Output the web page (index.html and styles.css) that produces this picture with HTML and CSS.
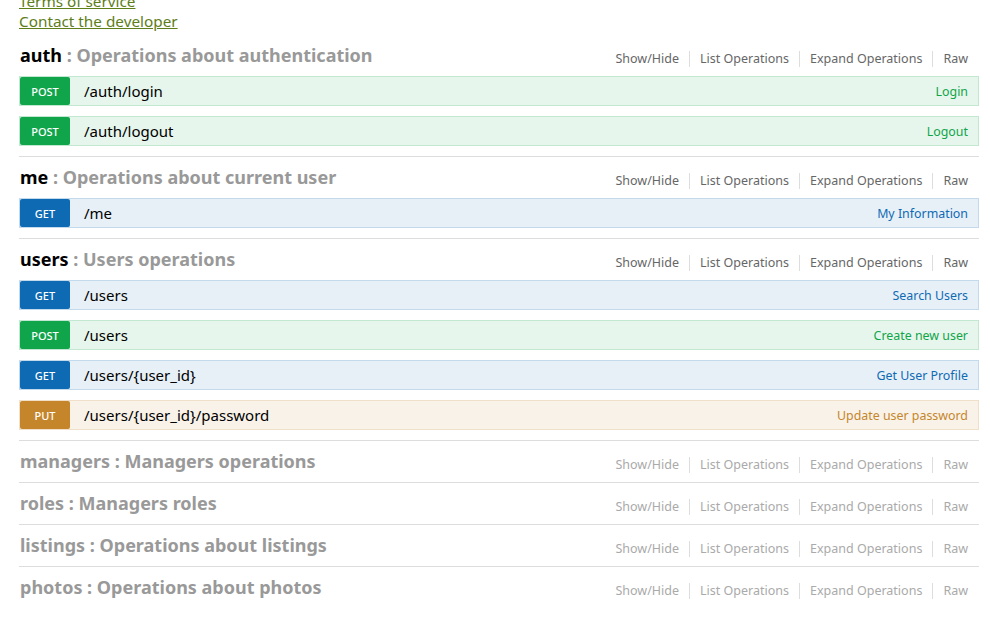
FILE: index.html
```html
<!DOCTYPE html>
<html>
<head>
<meta charset="utf-8">
<link rel="stylesheet" href="styles.css">
</head>
<body>
<div class="wrap">
  <div class="info">
    <a class="info-link" href="#">Terms of service</a>
    <a class="info-link" href="#">Contact the developer</a>
  </div>
  <ul class="resources">
    <li class="resource">
      <div class="heading">
        <h2 class="title"><span class="name">auth</span> : Operations about authentication</h2>
        <ul class="options">
          <li>Show/Hide</li><li>List Operations</li><li>Expand Operations</li><li>Raw</li>
        </ul>
      </div>
      <ul class="ops">
        <li class="op post"><span class="method">POST</span><span class="path">/auth/login</span><span class="summary">Login</span></li>
        <li class="op post"><span class="method">POST</span><span class="path">/auth/logout</span><span class="summary">Logout</span></li>
      </ul>
    </li>
    <li class="resource">
      <div class="heading">
        <h2 class="title"><span class="name">me</span> : Operations about current user</h2>
        <ul class="options">
          <li>Show/Hide</li><li>List Operations</li><li>Expand Operations</li><li>Raw</li>
        </ul>
      </div>
      <ul class="ops">
        <li class="op get"><span class="method">GET</span><span class="path">/me</span><span class="summary">My Information</span></li>
      </ul>
    </li>
    <li class="resource">
      <div class="heading">
        <h2 class="title"><span class="name">users</span> : Users operations</h2>
        <ul class="options">
          <li>Show/Hide</li><li>List Operations</li><li>Expand Operations</li><li>Raw</li>
        </ul>
      </div>
      <ul class="ops">
        <li class="op get"><span class="method">GET</span><span class="path">/users</span><span class="summary">Search Users</span></li>
        <li class="op post"><span class="method">POST</span><span class="path">/users</span><span class="summary">Create new user</span></li>
        <li class="op get"><span class="method">GET</span><span class="path">/users/{user_id}</span><span class="summary">Get User Profile</span></li>
        <li class="op put"><span class="method">PUT</span><span class="path">/users/{user_id}/password</span><span class="summary">Update user password</span></li>
      </ul>
    </li>
    <li class="resource collapsed">
      <div class="heading">
        <h2 class="title"><span class="name">managers</span> : Managers operations</h2>
        <ul class="options">
          <li>Show/Hide</li><li>List Operations</li><li>Expand Operations</li><li>Raw</li>
        </ul>
      </div>
    </li>
    <li class="resource collapsed">
      <div class="heading">
        <h2 class="title"><span class="name">roles</span> : Managers roles</h2>
        <ul class="options">
          <li>Show/Hide</li><li>List Operations</li><li>Expand Operations</li><li>Raw</li>
        </ul>
      </div>
    </li>
    <li class="resource collapsed">
      <div class="heading">
        <h2 class="title"><span class="name">listings</span> : Operations about listings</h2>
        <ul class="options">
          <li>Show/Hide</li><li>List Operations</li><li>Expand Operations</li><li>Raw</li>
        </ul>
      </div>
    </li>
    <li class="resource collapsed">
      <div class="heading">
        <h2 class="title"><span class="name">photos</span> : Operations about photos</h2>
        <ul class="options">
          <li>Show/Hide</li><li>List Operations</li><li>Expand Operations</li><li>Raw</li>
        </ul>
      </div>
    </li>
  </ul>
</div>
</body>
</html>
```

FILE: styles.css
```css
html, body {
  margin: 0;
  padding: 0;
  background: #fff;
}
body {
  font-family: "Noto Sans", "Open Sans", sans-serif;
  color: #000;
}
.wrap {
  width: 960px;
  margin: -9px 0 0 19px;
}
.info {
  display: flex;
  flex-direction: column;
  align-items: flex-start;
}
.info-link {
  font-size: 15.3px;
  line-height: 20px;
  color: #5e7e19;
  text-decoration: underline;
}
.resources {
  list-style: none;
  margin: 4px 0 0 0;
  padding: 0;
}
.resource {
  border-bottom: 1px solid #ddd;
}
.resource:last-child {
  border-bottom: none;
}
.heading {
  height: 41px;
  display: flex;
  align-items: center;
  justify-content: space-between;
}
.title {
  margin: 0;
  padding-left: 1px;
  font-size: 18px;
  font-weight: bold;
  color: #999;
  line-height: 41px;
}
.title .name {
  color: #000;
}
.collapsed .title .name {
  color: #999;
}
.options {
  list-style: none;
  margin: 0;
  padding: 6px 11px 0 0;
  display: flex;
  align-items: center;
}
.options li {
  font-size: 12.5px;
  line-height: 16px;
  color: #666;
  padding: 0 10px;
  border-right: 1px solid #ddd;
}
.options li:last-child {
  border-right: none;
  padding-right: 0;
}
.collapsed .options li {
  color: #aaa;
}
.ops {
  list-style: none;
  margin: 0;
  padding: 0;
}
.op {
  height: 28px;
  border: 1px solid;
  margin-bottom: 10px;
  display: flex;
  align-items: center;
}
.method {
  width: 50px;
  height: 28px;
  line-height: 29px;
  text-align: center;
  color: #fff;
  font-size: 11px;
  font-weight: 500;
  border-radius: 2px;
}
.path {
  flex: 1;
  padding-left: 14px;
  font-size: 15px;
}
.summary {
  font-size: 12.4px;
  padding-right: 10px;
}
.post { background: #e7f6ec; border-color: #c3e8d1; }
.post .method { background: #10a54a; }
.post .summary { color: #10a54a; }
.get { background: #e7f0f7; border-color: #c3d9ec; }
.get .method { background: #0f6ab4; }
.get .summary { color: #0f6ab4; }
.put { background: #f9f2e9; border-color: #f0e0ca; }
.put .method { background: #c5862b; }
.put .summary { color: #c5862b; }
```
